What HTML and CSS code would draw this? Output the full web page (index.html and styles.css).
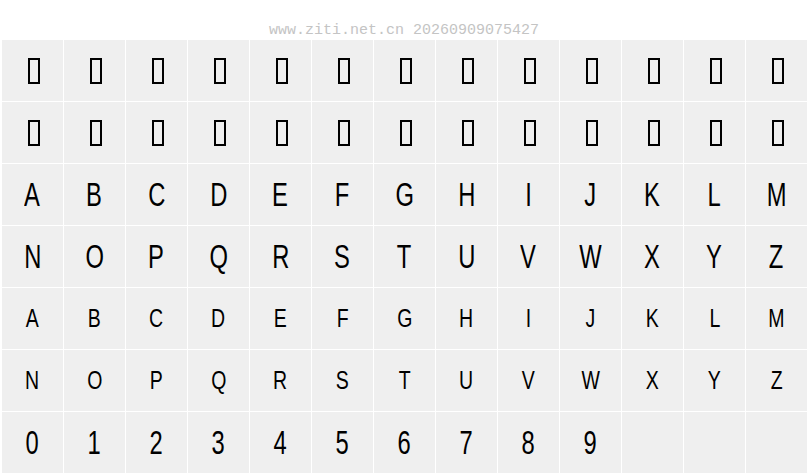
FILE: index.html
```html
<!DOCTYPE html>
<html lang="zh-CN">
<head>
    <meta charset="UTF-8">
    <title>字体预览</title>
    <link rel="stylesheet" href="styles.css">
</head>
<body>
    <div class="stamp">www.ziti.net.cn 20260909075427</div>
    <div class="grid" id="grid"></div>

    <script>
        const grid = document.getElementById('grid');
        const upper = 'ABCDEFGHIJKLMNOPQRSTUVWXYZ';

        function addCell(kind, text) {
            const cell = document.createElement('div');
            cell.classList.add('cell');
            if (kind === 'tofu') {
                const box = document.createElement('span');
                box.classList.add('tofu');
                cell.appendChild(box);
            } else if (kind) {
                const glyph = document.createElement('span');
                glyph.classList.add('glyph', kind);
                glyph.textContent = text;
                cell.appendChild(glyph);
            }
            grid.appendChild(cell);
        }

        // two rows of missing glyphs
        for (let i = 0; i < 26; i++) addCell('tofu');
        // capitals, then lower case drawn as small capitals
        for (const ch of upper) addCell('big', ch);
        for (const ch of upper) addCell('small', ch);
        // digits, padded to a full row
        for (let i = 0; i < 10; i++) addCell('big', String(i));
        for (let i = 0; i < 3; i++) addCell('');
    </script>
</body>
</html>
```

FILE: styles.css
```css
body {
    margin: 0;
    background-color: #fff;
    font-family: "Liberation Sans", Arial, sans-serif;
}
.stamp {
    height: 40px;
    box-sizing: border-box;
    padding-top: 23px;
    font-family: "Liberation Mono", monospace;
    font-size: 15px;
    line-height: 15px;
    color: #c4c4c4;
    text-align: center;
}
.grid {
    display: grid;
    grid-template-columns: repeat(13, 61px);
    grid-auto-rows: 61px;
    gap: 1px;
    margin-left: 2px;
}
.cell {
    background-color: #efefef;
    display: flex;
    justify-content: center;
    align-items: center;
}
.tofu {
    width: 8px;
    height: 22px;
    border: 2px solid #000;
    margin-left: 2px;
}
.glyph {
    display: inline-block;
    color: #000;
    transform: scaleX(0.72);
}
.glyph.big {
    font-size: 33px;
    line-height: 33px;
}
.glyph.small {
    font-size: 25px;
    line-height: 25px;
    transform: scaleX(0.78);
}
```
